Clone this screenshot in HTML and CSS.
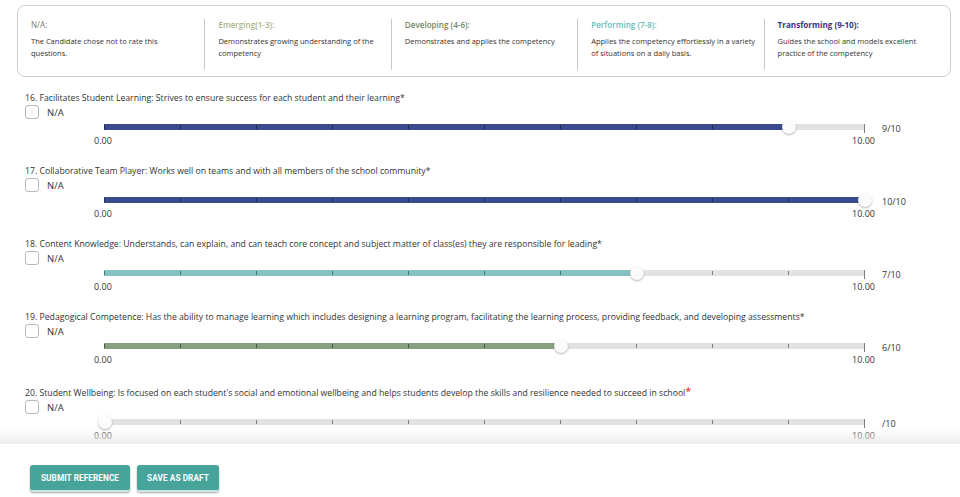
FILE: index.html
```html
<!DOCTYPE html>
<html lang="en">
<head>
<meta charset="utf-8">
<title>Reference</title>
<link rel="stylesheet" href="styles.css">
</head>
<body>
<div class="scroll">
  <div class="content">
    <div class="legend">
      <div class="legend-col">
        <div class="legend-title t-na">N/A:</div>
        <div class="legend-desc narrow">The Candidate chose not to rate this questions.</div>
      </div>
      <div class="legend-col">
        <div class="legend-title t-em">Emerging(1-3):</div>
        <div class="legend-desc">Demonstrates growing understanding of the competency</div>
      </div>
      <div class="legend-col">
        <div class="legend-title t-dev">Developing (4-6):</div>
        <div class="legend-desc">Demonstrates and applies the competency</div>
      </div>
      <div class="legend-col">
        <div class="legend-title t-perf">Performing (7-8):</div>
        <div class="legend-desc">Applies the competency effortlessly in a variety of situations on a daily basis.</div>
      </div>
      <div class="legend-col">
        <div class="legend-title t-trans">Transforming (9-10):</div>
        <div class="legend-desc">Guides the school and models excellent practice of the competency</div>
      </div>
    </div>

    <div class="questions">
    <div class="question">
      <div class="q-title">16. Facilitates Student Learning: Strives to ensure success for each student and their learning*</div>
      <label class="na"><span class="box"></span><span>N/A</span></label>
      <div class="slider-row">
        <div class="slider">
          <div class="track fill-navy" style="--v:90%"><span class="thumb"></span></div>
          <div class="scale"><span>0.00</span><span>10.00</span></div>
        </div>
        <div class="value">9/10</div>
      </div>
    </div>

    <div class="question">
      <div class="q-title">17. Collaborative Team Player: Works well on teams and with all members of the school community*</div>
      <label class="na"><span class="box"></span><span>N/A</span></label>
      <div class="slider-row">
        <div class="slider">
          <div class="track fill-navy" style="--v:100%"><span class="thumb"></span></div>
          <div class="scale"><span>0.00</span><span>10.00</span></div>
        </div>
        <div class="value">10/10</div>
      </div>
    </div>

    <div class="question">
      <div class="q-title">18. Content Knowledge: Understands, can explain, and can teach core concept and subject matter of class(es) they are responsible for leading*</div>
      <label class="na"><span class="box"></span><span>N/A</span></label>
      <div class="slider-row">
        <div class="slider">
          <div class="track fill-teal" style="--v:70%"><span class="thumb"></span></div>
          <div class="scale"><span>0.00</span><span>10.00</span></div>
        </div>
        <div class="value">7/10</div>
      </div>
    </div>

    <div class="question">
      <div class="q-title">19. Pedagogical Competence: Has the ability to manage learning which includes designing a learning program, facilitating the learning process, providing feedback, and developing assessments*</div>
      <label class="na"><span class="box"></span><span>N/A</span></label>
      <div class="slider-row">
        <div class="slider">
          <div class="track fill-green" style="--v:60%"><span class="thumb"></span></div>
          <div class="scale"><span>0.00</span><span>10.00</span></div>
        </div>
        <div class="value">6/10</div>
      </div>
    </div>

    <div class="question q-last">
      <div class="q-title">20. Student Wellbeing: Is focused on each student's social and emotional wellbeing and helps students develop the skills and resilience needed to succeed in school<span class="req">*</span></div>
      <label class="na"><span class="box"></span><span>N/A</span></label>
      <div class="slider-row">
        <div class="slider">
          <div class="track fill-none" style="--v:0%"><span class="thumb"></span></div>
          <div class="scale"><span>0.00</span><span>10.00</span></div>
        </div>
        <div class="value">/10</div>
      </div>
    </div>
    </div>
  </div>
</div>
<div class="footer">
  <button class="btn">SUBMIT REFERENCE</button>
  <button class="btn">SAVE AS DRAFT</button>
</div>
</body>
</html>
```

FILE: styles.css
```css
* { box-sizing: border-box; }
html, body { margin: 0; padding: 0; background: #fff; }
body {
  font-family: "Open Sans", "Noto Sans", sans-serif;
  color: #333;
  width: 960px;
  height: 497px;
  overflow: hidden;
}
.scroll {
  height: 444px;
  overflow: hidden;
  position: relative;
}
.scroll::after {
  content: "";
  position: absolute;
  left: 0; right: 0; bottom: 0;
  height: 16px;
  background: linear-gradient(to bottom, rgba(236,236,236,0), rgba(236,236,236,0.95));
}
.content { padding: 5px 9px 0 17px; }

.legend {
  display: grid;
  grid-template-columns: repeat(5, 1fr);
  border: 1px solid #cfcfcf;
  border-radius: 8px;
  padding: 13px 0 6px;
  height: 72px;
}
.legend-col {
  padding: 0 6px 0 13px;
  border-left: 1px solid #c9c9c9;
  height: 51px;
}
.legend-col:first-child { border-left: none; }
.legend-title {
  font-size: 8.1px;
  line-height: 12px;
  margin-bottom: 4px;
  font-weight: 600;
}
.t-na { color: #7a7a7a; font-weight: 400; }
.t-em { color: #a9b48c; }
.t-dev { color: #6f8868; }
.t-perf { color: #69bdbd; }
.t-trans { color: #2d3a85; font-weight: 700; }
.legend-desc {
  font-size: 7.5px;
  line-height: 12px;
  color: #333;
}
.legend-desc.narrow { max-width: 140px; }

.questions { padding-top: 7px; }
.question { padding: 8px 0 0 8px; height: 73px; }
.q-last { margin-top: 3px; }
.q-title {
  font-size: 8.7px;
  line-height: 12px;
  color: #333;
  white-space: nowrap;
}
.req { color: #e0201c; font-size: 11px; line-height: 8px; vertical-align: top; }
.na {
  display: flex;
  align-items: center;
  gap: 8px;
  margin-top: 1px;
  height: 14px;
  font-size: 9.5px;
}
.box {
  width: 14px; height: 14px;
  border: 1px solid #b9b9b9;
  border-radius: 3px;
  background: #fff;
}
.slider-row {
  display: flex;
  align-items: flex-start;
  padding-left: 79px;
  margin-top: 5px;
}
.slider { width: 760px; }
.track {
  position: relative;
  height: 6px;
  background: linear-gradient(to right, var(--fill) 0 var(--v), #e2e2e2 var(--v) 100%);
}
.fill-navy { --fill: #3b4a8e; }
.fill-teal { --fill: #84c3c2; }
.fill-green { --fill: #87a07f; }
.fill-none { --fill: #e2e2e2; }
.track::before {
  content: "";
  position: absolute;
  left: 0; right: 0;
  top: 1px; height: 4px;
  background: repeating-linear-gradient(to right, rgba(0,0,0,0.45) 0 1px, transparent 1px 76px);
}
.track::after {
  content: "";
  position: absolute;
  right: -1px; top: 0;
  width: 1px; height: 9px;
  background: #7d7d7d;
}
.thumb {
  position: absolute;
  top: -4px;
  left: calc(var(--v) - 6px);
  width: 14px; height: 14px;
  border-radius: 50%;
  background: #fbfbfb;
  box-shadow: 0 1px 2px rgba(0,0,0,0.3);
  z-index: 1;
}
.scale {
  display: flex;
  justify-content: space-between;
  margin: 5px -11px 0 -10px;
  font-size: 9px;
  line-height: 12px;
  color: #333;
}
.value {
  margin-left: 18px;
  margin-top: -1px;
  font-size: 9px;
  line-height: 12px;
  color: #333;
}

.footer {
  height: 53px;
  padding: 21px 0 0 30px;
  display: flex;
  gap: 7px;
  align-items: flex-start;
}
.btn {
  height: 27px;
  padding: 0 6px;
  border: none;
  border-bottom: 2px solid #cfe7e4;
  border-radius: 3px;
  background: #46a49b;
  color: #fff;
  font-family: "Roboto", "Liberation Sans", sans-serif;
  font-weight: 700;
  font-size: 8.2px;
  letter-spacing: 0.1px;
  box-shadow: 0 1px 2px rgba(0,0,0,0.35);
}
.btn:first-child { width: 100px; }
.btn:last-child { width: 82px; }
```
